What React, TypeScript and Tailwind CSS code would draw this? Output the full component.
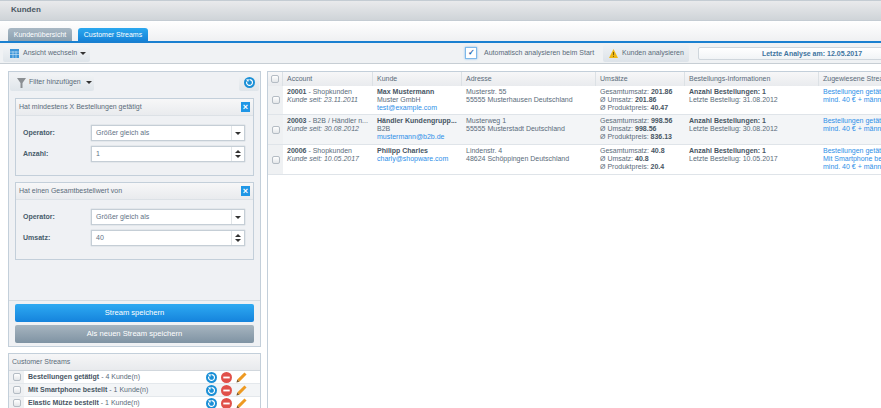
import React from 'react';

const Caret = () => <span className="inline-block w-0 h-0 border-x-[3px] border-x-transparent border-t-[3px] border-t-[#333]" />;

const RefreshIcon = ({ size = 12 }: { size?: number }) => (
  <svg width={size} height={size} viewBox="0 0 12 12" className="shrink-0">
    <circle cx="6" cy="6" r="6" fill="#1a8fd6" />
    <path d="M6 2.8 A3.2 3.2 0 1 1 3 5" fill="none" stroke="#fff" strokeWidth="1.3" />
    <path d="M2.2 2.6 L5.4 2.4 L4.6 5.4 Z" fill="#fff" />
  </svg>
);

const MinusIcon = () => (
  <svg width="11" height="11" viewBox="0 0 12 12" className="shrink-0">
    <circle cx="6" cy="6" r="6" fill="#e0504a" />
    <rect x="2.5" y="5" width="7" height="2" fill="#fff" />
  </svg>
);

const PencilIcon = () => (
  <svg width="11" height="11" viewBox="0 0 13 13" className="shrink-0">
    <path d="M10 0.5 L12.5 3 L4 11.5 L1.5 9 Z" fill="#ee9a22" />
    <path d="M1.5 9 L4 11.5 L0.5 12.5 Z" fill="#7a5a30" />
  </svg>
);

const Check = () => (
  <span className="w-[8px] h-[8px] rounded-[2px] border border-[#b4bcc4] bg-gradient-to-b from-white to-[#e3e6e9] block" />
);

const Field = ({ label, value, spinner }: { label: string; value: string; spinner?: boolean }) => (
  <div className="flex items-center h-[16px]">
    <div className="w-[75px] pl-[7px] font-bold text-[#475c6b]">{label}</div>
    <div className="flex-1 h-[16px] flex bg-white border border-[#c5ced6] shadow-[0_0_1px_#aab5bf] mr-[8px]">
      <div className="flex-1 pl-[4px] leading-[14px] text-[#5f7285]">{value}</div>
      <div className="w-[13px] border-l border-[#e1e5e8] flex flex-col items-center justify-center gap-[2px]">
        {spinner ? (
          <>
            <span className="w-0 h-0 border-x-[3px] border-x-transparent border-b-[3px] border-b-[#333]" />
            <span className="w-0 h-0 border-x-[3px] border-x-transparent border-t-[3px] border-t-[#333]" />
          </>
        ) : (
          <Caret />
        )}
      </div>
    </div>
  </div>
);

const FilterBox = ({ title, children }: { title: string; children: React.ReactNode }) => (
  <div className="mx-[6px] h-[78px] border border-[#c3cfda] bg-[#eff1f4]">
    <div className="h-[17px] flex items-center justify-between pl-[3px] pr-[3px] bg-gradient-to-b from-[#f7f7f8] to-[#e9ebee] border-b border-[#dce1e6] text-[#5a6b7a]">
      <span>{title}</span>
      <span className="w-[9px] h-[10px] bg-[#1f96e6] text-white text-[9px] font-bold leading-[10px] text-center">×</span>
    </div>
    <div className="flex flex-col gap-[5px] pt-[9px]">{children}</div>
  </div>
);

const rows = [
  {
    id: '20001', group: 'Shopkunden', since: '23.11.2011', name: 'Max Mustermann', lines: ['Muster GmbH'], mail: 'test@example.com',
    street: 'Musterstr. 55', city: '55555 Musterhausen Deutschland', total: '201.86', avg: '201.86', prod: '40.47', last: '31.08.2012',
    streams: ['Bestellungen getätigt', 'mind. 40 € + männlich'], bg: 'bg-white', h: 'h-[29px]',
  },
  {
    id: '20003', group: 'B2B / Händler n...', since: '30.08.2012', name: 'Händler Kundengrupp...', lines: ['B2B'], mail: 'mustermann@b2b.de',
    street: 'Musterweg 1', city: '55555 Musterstadt Deutschland', total: '998.56', avg: '998.56', prod: '836.13', last: '30.08.2012',
    streams: ['Bestellungen getätigt', 'mind. 40 € + männlich'], bg: 'bg-[#f3f5f7]', h: 'h-[30px]',
  },
  {
    id: '20006', group: 'Shopkunden', since: '10.05.2017', name: 'Philipp Charles', lines: [], mail: 'charly@shopware.com',
    street: 'Lindenstr. 4', city: '48624 Schöppingen Deutschland', total: '40.8', avg: '40.8', prod: '20.4', last: '10.05.2017',
    streams: ['Bestellungen getätigt', 'Mit Smartphone bestellt', 'mind. 40 € + männlich'], bg: 'bg-white', h: 'h-[30px]',
  },
];

const streams = [
  { name: 'Bestellungen getätigt', count: 4, bg: 'bg-white' },
  { name: 'Mit Smartphone bestellt', count: 1, bg: 'bg-[#f3f5f7]' },
  { name: 'Elastic Mütze bestellt', count: 1, bg: 'bg-white' },
];

const headers = [
  { label: 'Account', w: 'w-[90px]' },
  { label: 'Kunde', w: 'w-[89px]' },
  { label: 'Adresse', w: 'w-[134px]' },
  { label: 'Umsätze', w: 'w-[89px]' },
  { label: 'Bestellungs-Informationen', w: 'w-[134px]' },
  { label: 'Zugewiesene Streams', w: 'w-[90px]' },
];

const App: React.FC = () => {
  return (
    <div className="w-[881px] h-[408px] overflow-hidden bg-white text-[7px] leading-[8.2px] text-[#5a6b7a] font-['Liberation_Sans',Arial,sans-serif]">
      {/* Title bar */}
      <div className="h-[21px] flex items-center pl-[11px] bg-gradient-to-b from-[#e9eaec] to-[#cfd4d8] border-y border-[#c4ccd3] text-[8px] font-bold text-[#4b5863]">Kunden</div>

      {/* Tabs */}
      <div className="h-[22px] flex items-end pl-[8px] gap-[6px] bg-gradient-to-b from-white to-[#eff0f2] border-b-2 border-[#1a80d0]">
        <div className="h-[13px] w-[64px] rounded-t-[3px] bg-gradient-to-b from-[#a9b8c4] to-[#8ba0b0] text-white text-center leading-[13px] whitespace-nowrap">Kundenübersicht</div>
        <div className="h-[13px] w-[70px] rounded-t-[3px] bg-gradient-to-b from-[#2ba8ef] to-[#1583d8] text-white text-center leading-[13px] whitespace-nowrap">Customer Streams</div>
      </div>

      {/* Toolbar */}
      <div className="h-[21px] flex items-center overflow-hidden bg-[#f0f2f4] border-b border-[#c7ced4]">
        <div className="ml-[3px] h-[17px] w-[87px] shrink-0 flex items-center gap-[4px] pl-[7px] rounded-[2px] bg-gradient-to-b from-[#f3f5f7] to-[#dfe5ea]">
          <svg width="9" height="9" viewBox="0 0 9 9" className="shrink-0"><rect width="9" height="9" fill="#3d95d8" /><path d="M0 3H9M0 5.5H9M3 2V9M6 2V9" stroke="#d5e9f8" strokeWidth="0.6" /></svg>
          <span className="w-[53px] whitespace-nowrap">Ansicht wechseln</span>
          <span className="flex"><Caret /></span>
        </div>
        <div className="ml-[375px] flex items-center shrink-0">
          <span className="w-[12px] h-[12px] border border-[#7db8ea] bg-white shadow-[0_0_2px_#7db8ea] flex items-center justify-center text-[#1f5fa8] text-[8px] font-bold leading-none">✓</span>
          <span className="ml-[7px] w-[110px] whitespace-nowrap">Automatisch analysieren beim Start</span>
        </div>
        <div className="ml-[9px] h-[17px] w-[86px] shrink-0 flex items-center gap-[4px] pl-[6px] rounded-[2px] bg-gradient-to-b from-[#eef1f4] to-[#dde3e9]">
          <svg width="9" height="9" viewBox="0 0 9 9" className="shrink-0"><path d="M4.5 0 L9 9 H0 Z" fill="#efb815" /><rect x="4.1" y="3" width="0.9" height="3.2" fill="#6b5208" /><rect x="4.1" y="7" width="0.9" height="0.9" fill="#6b5208" /></svg>
          <span className="whitespace-nowrap">Kunden analysieren</span>
        </div>
        <div className="ml-[9px] h-[13px] w-[228px] shrink-0 border border-[#cfd6dc] rounded-[2px] bg-gradient-to-b from-white to-[#f1f4f6] text-center text-[#40749f] font-bold leading-[11px]">Letzte Analyse am: 12.05.2017</div>
      </div>

      <div className="flex items-stretch h-[345px] pl-[8px] gap-[6px]">
        {/* Left column */}
        <div className="w-[253px] shrink-0 flex flex-col gap-[6px] pt-[7px]">
          <div className="h-[276px] shrink-0 border border-[#c3cfda] bg-[#eff1f4] flex flex-col">
            <div className="h-[19px] flex items-center justify-between pl-[1px] pr-[1px] mt-[1px]">
              <div className="h-[17px] w-[84px] flex items-center gap-[3px] pl-[7px] rounded-[2px] bg-gradient-to-b from-[#f1f3f5] to-[#dfe5ea]">
                <svg width="9" height="10" viewBox="0 0 9 10" className="shrink-0"><path d="M0 0 H9 L5.5 5 V10 H3.5 V5 Z" fill="#8b8f93" /></svg>
                <span className="w-[54px] whitespace-nowrap">Filter hinzufügen</span>
                <span className="flex"><Caret /></span>
              </div>
              <div className="h-[17px] w-[20px] rounded-[2px] bg-gradient-to-b from-[#f1f3f5] to-[#dfe5ea] flex items-center justify-center"><RefreshIcon size={11} /></div>
            </div>
            <div className="flex flex-col gap-[6px] pt-[6px]">
              <FilterBox title="Hat mindestens X Bestellungen getätigt">
                <Field label="Operator:" value="Größer gleich als" />
                <Field label="Anzahl:" value="1" spinner />
              </FilterBox>
              <FilterBox title="Hat einen Gesamtbestellwert von">
                <Field label="Operator:" value="Größer gleich als" />
                <Field label="Umsatz:" value="40" spinner />
              </FilterBox>
            </div>
            <div className="mt-auto border-t border-[#d5dce2] px-[6px] pt-[3px] pb-[3px] flex flex-col gap-[3px]">
              <div className="h-[18px] rounded-[2px] bg-gradient-to-b from-[#2eaaf2] to-[#1583dc] text-white text-[7.6px] text-center leading-[18px]">Stream speichern</div>
              <div className="h-[18px] rounded-[2px] bg-gradient-to-b from-[#a7b5c0] to-[#7f93a3] text-white text-[7.6px] text-center leading-[18px]">Als neuen Stream speichern</div>
            </div>
          </div>

          <div className="border border-[#c3cfda] bg-white">
            <div className="h-[17px] flex items-center pl-[3px] bg-gradient-to-b from-[#f6f6f7] to-[#e8eaed] border-b border-[#d1d7dd]">Customer Streams</div>
            {streams.map((s) => (
              <div key={s.name} className={`h-[13px] flex items-center border-b border-[#e4e8ec] ${s.bg}`}>
                <div className="w-[15px] h-full bg-[#eff1f3] flex items-center justify-center shrink-0"><Check /></div>
                <div className="ml-[4px] w-[178px] whitespace-nowrap"><b className="text-[#475563]">{s.name}</b> - {s.count} Kunde(n)</div>
                <div className="flex items-center gap-[4px]">
                  <RefreshIcon size={11} />
                  <MinusIcon />
                  <PencilIcon />
                </div>
              </div>
            ))}
          </div>
        </div>

        {/* Table */}
        <div className="flex-1 overflow-hidden mt-[7px] border-l border-[#c3cfda]">
          <div className="flex h-[15px] border-t border-[#c3cfda] bg-gradient-to-b from-[#f7f7f8] to-[#e9ebee] w-[640px]">
            <div className="w-[15px] shrink-0 border-r border-[#dce1e5] flex items-center justify-center"><Check /></div>
            {headers.map((h) => (
              <div key={h.label} className={`${h.w} shrink-0 pl-[4px] border-r border-[#dce1e5] leading-[14px] whitespace-nowrap`}>{h.label}</div>
            ))}
          </div>
          {rows.map((r) => (
            <div key={r.id} className={`flex w-[640px] border-b border-[#dfe4e9] ${r.h} ${r.bg}`}>
              <div className="w-[15px] shrink-0 bg-[#eff1f3] flex items-center justify-center"><Check /></div>
              <div className="w-[90px] shrink-0 pl-[4px] pt-[2px] whitespace-nowrap">
                <div><b className="text-[#475563]">{r.id}</b> - {r.group}</div>
                <div className="italic">Kunde seit: {r.since}</div>
              </div>
              <div className="w-[89px] shrink-0 pl-[4px] pt-[2px] whitespace-nowrap">
                <div className="font-bold text-[#475563]">{r.name}</div>
                {r.lines.map((l) => <div key={l}>{l}</div>)}
                <div className="text-[#2e8fe8]">{r.mail}</div>
              </div>
              <div className="w-[134px] shrink-0 pl-[4px] pt-[2px] whitespace-nowrap">
                <div>{r.street}</div>
                <div>{r.city}</div>
              </div>
              <div className="w-[89px] shrink-0 pl-[4px] pt-[2px] whitespace-nowrap">
                <div>Gesamtumsatz: <b className="text-[#475563]">{r.total}</b></div>
                <div>Ø Umsatz: <b className="text-[#475563]">{r.avg}</b></div>
                <div>Ø Produktpreis: <b className="text-[#475563]">{r.prod}</b></div>
              </div>
              <div className="w-[134px] shrink-0 pl-[4px] pt-[2px] whitespace-nowrap">
                <div className="font-bold text-[#475563]">Anzahl Bestellungen: 1</div>
                <div>Letzte Bestellug: {r.last}</div>
              </div>
              <div className="w-[90px] shrink-0 pl-[4px] pt-[2px] whitespace-nowrap text-[#2e8fe8]">
                {r.streams.map((s) => <div key={s}>{s}</div>)}
              </div>
            </div>
          ))}
        </div>
      </div>
    </div>
  );
};

export default App;
